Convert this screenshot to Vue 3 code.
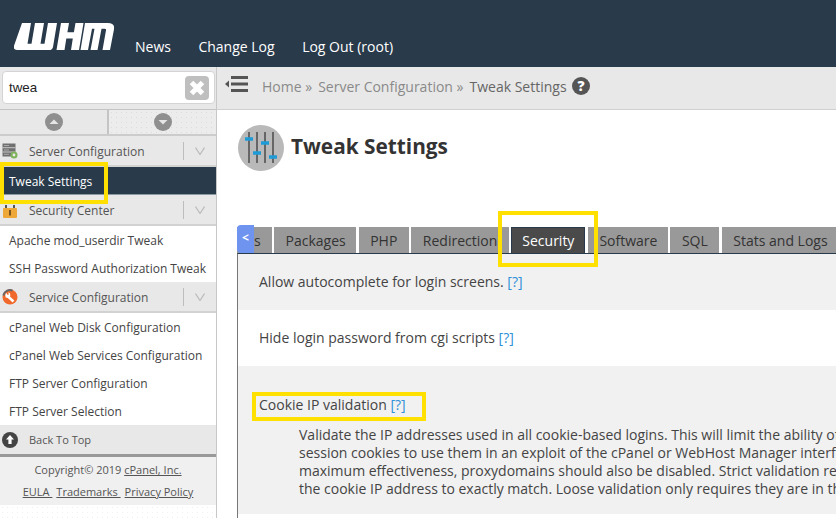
<script setup>
const groups = [
  { title: 'Server Configuration', icon: 'server', items: [{ label: 'Tweak Settings', active: true }] },
  { title: 'Security Center', icon: 'lock', items: [{ label: 'Apache mod_userdir Tweak' }, { label: 'SSH Password Authorization Tweak' }] },
  { title: 'Service Configuration', icon: 'wrench', items: [{ label: 'cPanel Web Disk Configuration' }, { label: 'cPanel Web Services Configuration' }, { label: 'FTP Server Configuration' }, { label: 'FTP Server Selection' }] }
]
const tabs = ['s', 'Packages', 'PHP', 'Redirection', 'Security', 'Software', 'SQL', 'Stats and Logs']
</script>

<template>
  <div class="page">
    <header class="top">
      <svg class="logo" viewBox="0 0 100 26" width="100" height="27" preserveAspectRatio="none">
        <path fill="#fff" d="M8 0h9L13.500 20h4L21 0h9L26.500 20h4L34 0h9L39 23Q38.500 26 35 26H3Q-1 26 0 22Z" />
        <path fill="#fff" d="M47 0h8l-1.600 9h6.500L61.500 0h8L65 26h-8l1.800-11h-6.500L50.500 26h-8Z" />
        <path fill="#fff" d="M71 0H94Q101 0 100 6L96 26h-7.500L92 7Q92.500 5.500 90.500 5.500H87.500L83.500 26H76.500L80.500 5.500H78L74 26H66.500Z" />
      </svg>
      <nav class="topnav">
        <a>News</a><a>Change Log</a><a>Log Out (root)</a>
      </nav>
    </header>

    <div class="body">
      <aside class="side">
        <div class="search">
          <div class="field">
            <span>twea</span>
            <i class="clear"><svg viewBox="0 0 24 24" width="24" height="24"><path d="M6.500 6.500l11 11M17.500 6.500l-11 11" stroke="#fff" stroke-width="5" /></svg></i>
          </div>
        </div>
        <div class="arrows">
          <div class="arrow"><svg viewBox="0 0 18 18" width="18" height="18"><circle cx="9" cy="9" r="9" fill="#8f8f8f" /><path d="M4.500 11L9 6.500l4.500 4.500z" fill="#e6e6e6" /></svg></div>
          <div class="arrow dotted"><svg viewBox="0 0 18 18" width="18" height="18"><circle cx="9" cy="9" r="9" fill="#8f8f8f" /><path d="M4.500 7L9 11.500 13.500 7z" fill="#e6e6e6" /></svg></div>
        </div>
        <section v-for="g in groups" :key="g.title">
          <div class="ghead">
            <span class="gicon">
              <svg v-if="g.icon === 'server'" viewBox="0 0 18 18" width="18" height="18">
                <rect x="0.500" y="2.500" width="13" height="13" fill="#707070" />
                <path d="M.5 6.700h13M.5 11h13" stroke="#c8c8c8" />
                <path d="M2 4.500h5M2 9h5M2 13.300h5" stroke="#aaa" />
                <circle cx="12" cy="14" r="3.500" fill="#7fb35a" /><circle cx="12" cy="14" r="1.400" fill="#e8e8e8" />
              </svg>
              <svg v-else-if="g.icon === 'lock'" viewBox="0 0 18 18" width="18" height="18">
                <path d="M4 8V5M12 8V5" stroke="#555" stroke-width="2" />
                <rect x="1" y="8" width="14" height="10" rx="1" fill="#eea83a" />
                <rect x="7" y="10" width="2" height="5.500" fill="#7a5520" />
              </svg>
              <svg v-else viewBox="0 0 18 18" width="18" height="18">
                <circle cx="8" cy="10" r="7.500" fill="#f0692a" />
                <path d="M1.300 8.500A7 7 0 0 1 10.500 3.500" fill="none" stroke="#666" stroke-width="2" />
                <path d="M5.500 9l6 5.500" stroke="#fff" stroke-width="2.500" />
                <path d="M3.200 8l1-2.200 1.200 2 1.500-.3-.8-2.300 2 1.300.2 2.500-2 2-2.600-.6z" fill="#fff" />
              </svg>
            </span>
            <span class="gtitle">{{ g.title }}</span>
            <span class="chev"><svg viewBox="0 0 10 8" width="10" height="8"><path d="M.5 .5L5 7.500 9.500 .5" fill="none" stroke="#bdbdbd" stroke-width="1.300" /></svg></span>
          </div>
          <a v-for="it in g.items" :key="it.label" class="item" :class="{ active: it.active }">{{ it.label }}</a>
        </section>
        <div class="ghead back">
          <span class="gicon"><svg viewBox="0 0 16 16" width="16" height="16"><circle cx="8" cy="8" r="8" fill="#444" /><path d="M8 3l4 4.500H9.600V12H6.400V7.500H4z" fill="#fff" /></svg></span>
          <span class="backtext">Back To Top</span>
        </div>
        <footer class="foot">
          <p>Copyright© 2019 <u>cPanel, Inc.</u></p>
          <p class="links"><u>EULA </u><u>Trademarks </u><u>Privacy Policy</u></p>
        </footer>
        <div class="dots"></div>
      </aside>

      <main class="main">
        <div class="crumbs">
          <svg class="menu" viewBox="0 0 24 18" width="24" height="18">
            <path d="M6 2.500h17M6 9h17M6 15.500h17" stroke="#555" stroke-width="3" /><path d="M0 9l4-3.500v7z" fill="#555" />
          </svg>
          <span class="crumb">Home »</span>
          <span class="crumb">Server Configuration »</span>
          <span class="crumb cur">Tweak Settings</span>
          <svg viewBox="0 0 18 18" width="18" height="18"><circle cx="9" cy="9" r="9" fill="#555" /><text x="9" y="14" text-anchor="middle" class="q">?</text></svg>
        </div>
        <div class="content">
          <div class="title">
            <svg viewBox="0 0 46 46" width="46" height="46">
              <circle cx="23" cy="23" r="23" fill="#b9b9b9" />
              <path d="M11 7v31M19 7v31M27 7v31M35 7v31" stroke="#666" stroke-width="2" />
              <path d="M7 14h8M15 28h8M23 18h8M31 32h8" stroke="#1e9ad6" stroke-width="3.500" />
            </svg>
            <h1>Tweak Settings</h1>
          </div>
          <div class="tabswrap">
            <div class="tabs">
              <span v-for="t in tabs" :key="t" class="tab" :class="{ on: t === 'Security', cut: t === 's' }">{{ t }}</span>
            </div>
            <span class="back-btn">&lt;</span>
          </div>
          <div class="panel">
            <div class="row"><span>Allow autocomplete for login screens. <a>[?]</a></span></div>
            <div class="row white"><span>Hide login password from cgi scripts <a>[?]</a></span></div>
            <div class="row tall">
              <span class="cookie">Cookie IP validation <a>[?]</a></span>
              <p class="desc">Validate the IP addresses used in all cookie-based logins. This will limit the ability of<br>session cookies to use them in an exploit of the cPanel or WebHost Manager interf<br>maximum effectiveness, proxydomains should also be disabled. Strict validation re<br>the cookie IP address to exactly match. Loose validation only requires they are in th</p>
            </div>
          </div>
        </div>
      </main>
    </div>

    <div class="mark m1"></div>
    <div class="mark m2"></div>
    <div class="mark m3"></div>
  </div>
</template>

<style>
html, body { margin: 0; overflow: hidden; }
</style>

<style scoped>
.page { position: relative; width: 836px; height: 518px; overflow: hidden; font-family: "Open Sans", sans-serif; color: #444; background: #fff; }
.top { height: 67px; background: #293a4b; display: flex; box-sizing: border-box; }
.logo { margin: 23px 0 0 14px; flex: none; }
.topnav { display: flex; gap: 27.500px; margin: 37px 0 0 21px; color: #fff; font-size: 14px; line-height: 19px; }
.body { display: flex; height: 451px; }
.side { width: 216px; flex: none; border-right: 1px solid #c8c8c8; display: flex; flex-direction: column; background: #fff; }
.search { height: 42px; background: #e8e8e8; padding: 4px 1px 0 2px; box-sizing: border-box; }
.field { height: 33px; box-sizing: border-box; background: #fff; border: 1px solid #d4d4d4; border-radius: 4px; display: flex; align-items: center; justify-content: space-between; padding: 0 5px 0 6px; font-family: "Liberation Sans", sans-serif; font-size: 13.330px; color: #222; }
.clear { width: 24px; height: 24px; border-radius: 4px; background: #bfbfbf; display: block; }
.clear svg { display: block; }
.arrows { display: flex; height: 27px; box-sizing: border-box; border-top: 1px solid #c4c4c4; border-bottom: 2px solid #ccc; background: #e8e8e8; }
.arrow { flex: 1; display: flex; align-items: center; justify-content: center; }
.arrow.dotted { border-left: 2px solid #c4c4c4; background: radial-gradient(#dcdcdc 0.500px, transparent 0.700px) 0 0 / 5px 5px; background-color: #ececec; }
.ghead { height: 31px; box-sizing: border-box; background: #e8e8e8; border-bottom: 2px solid #d2d2d2; display: flex; align-items: center; font-size: 12px; color: #555; }
.gicon { width: 29px; flex: none; padding-left: 2px; box-sizing: border-box; display: flex; margin-top: -2px; }
.gtitle { flex: 1; padding-top: 2px; }
.chev { width: 33px; height: 18px; border-left: 1px solid #bdbdbd; box-sizing: border-box; display: flex; align-items: center; justify-content: center; }
.item { display: block; height: 28px; line-height: 30px; padding-left: 9px; font-size: 12px; color: #444; white-space: nowrap; background: #fff; }
.item.active { background: #293a4b; color: #fff; border-bottom: 1px solid #8a9aa0; box-sizing: border-box; }
.back { border-bottom: 3px solid #999; height: 32px; }
.back .gicon { margin-top: 0; }
.backtext { font-size: 11px; }
.foot { background: #f0f0f0; height: 48px; padding-top: 2px; box-sizing: border-box; text-align: center; font-size: 11px; color: #555; }
.foot p { margin: 0; line-height: 22px; }
.links { display: flex; justify-content: center; gap: 4px; }
.links u { white-space: pre; }
.dots { flex: 1; background: radial-gradient(#f0f0f0 0.500px, transparent 0.700px) 0 0 / 5px 5px; }
.main { flex: 1; min-width: 0; display: flex; flex-direction: column; }
.crumbs { height: 43px; flex: none; box-sizing: border-box; background: #e8e8e8; border-bottom: 1px solid #d0d0d0; display: flex; align-items: center; padding: 0 0 4px 8px; font-size: 14px; color: #8a8a8a; }
.menu { margin-right: 13px; margin-top: -4px; }
.crumb { margin-right: 6px; }
.crumb.cur { color: #666; margin-right: 5px; }
.q { font: 800 14px "Open Sans", sans-serif; fill: #fff; }
.content { padding: 15px 0 0 20px; overflow: hidden; flex: 1; }
.title { display: flex; align-items: center; gap: 7px; height: 46px; margin-left: 1px; }
.title svg { flex: none; }
.title h1 { margin: -4px 0 0; font-size: 20.800px; line-height: 30px; font-weight: 700; color: #333; }
.tabswrap { position: relative; margin-top: 54px; height: 28px; }
.tabs { display: flex; gap: 2.500px; padding-top: 2px; white-space: nowrap; }
.tab { height: 26px; line-height: 27px; box-sizing: border-box; padding: 0 11.500px; background: #999; color: #333; font-size: 14px; flex: none; }
.tab.cut { width: 34.500px; padding: 0 0 0 17px; }
.tab:nth-child(2) { padding-right: 10.500px; }
.tab:nth-child(6) { padding-right: 10.500px; }
.tab.on { background: #4a4a4a; color: #fff; border: 1px solid #293a4b; border-bottom: 0; line-height: 25px; padding: 0 10px; }
.back-btn { position: absolute; left: 0; top: 0; width: 17px; height: 28px; line-height: 26px; border-radius: 4px 0 0 4px; background: #6f94f0; color: #fff; font-size: 12px; text-align: center; font-weight: 700; }
.panel { border-left: 1px solid #777; border-top: 1px solid #293a4b; min-height: 270px; }
.row { height: 56px; background: #f1f1f1; box-sizing: border-box; padding: 18px 0 0 21px; font-size: 14px; line-height: 20px; color: #444; white-space: nowrap; }
.row a { color: #3090d8; }
.row.white { background: #fff; }
.row.tall { height: 148px; padding-top: 29px; overflow: hidden; }
.cookie { display: block; }
.desc { margin: 11px 0 0 40px; font-size: 14px; line-height: 18px; color: #444; }
.mark { position: absolute; border: 4px solid #ffe000; box-sizing: border-box; pointer-events: none; }
.m1 { left: 0; top: 162px; width: 108px; height: 42px; }
.m2 { left: 498px; top: 211px; width: 100px; height: 56px; }
.m3 { left: 252px; top: 392px; width: 174px; height: 29px; }
</style>
